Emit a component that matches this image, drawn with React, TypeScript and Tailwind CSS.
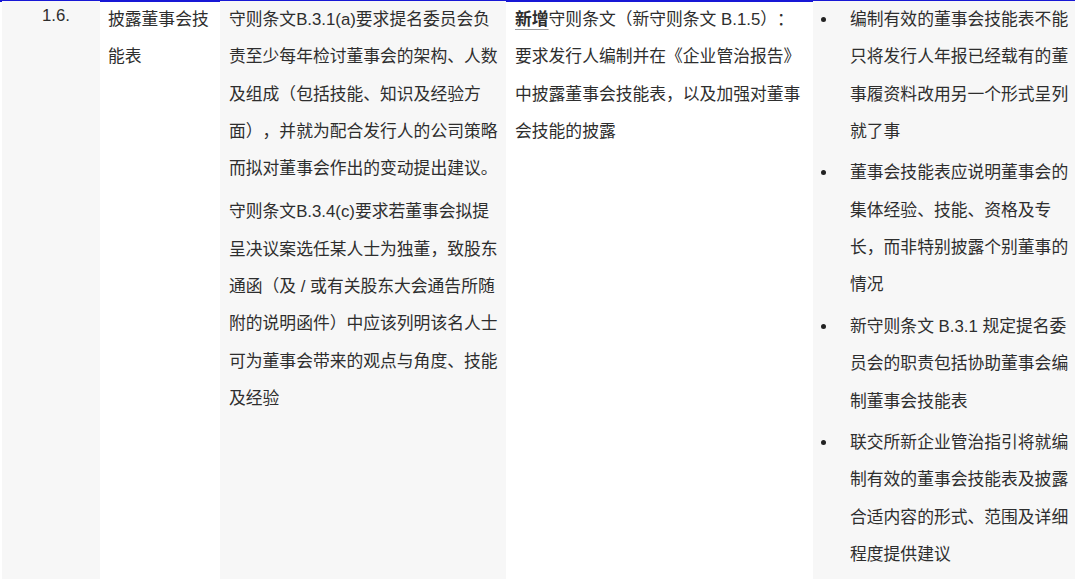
import React from "react";

const col3a = [
  "守则条文B.3.1(a)要求提名委员会负",
  "责至少每年检讨董事会的架构、人数",
  "及组成（包括技能、知识及经验方",
  "面），并就为配合发行人的公司策略",
  "而拟对董事会作出的变动提出建议。",
];

const col3b = [
  "守则条文B.3.4(c)要求若董事会拟提",
  "呈决议案选任某人士为独董，致股东",
  "通函（及 / 或有关股东大会通告所随",
  "附的说明函件）中应该列明该名人士",
  "可为董事会带来的观点与角度、技能",
  "及经验",
];

const col4 = [
  "要求发行人编制并在《企业管治报告》",
  "中披露董事会技能表，以及加强对董事",
  "会技能的披露",
];

const bullets = [
  ["编制有效的董事会技能表不能", "只将发行人年报已经载有的董", "事履资料改用另一个形式呈列", "就了事"],
  ["董事会技能表应说明董事会的", "集体经验、技能、资格及专", "长，而非特别披露个别董事的", "情况"],
  ["新守则条文 B.3.1 规定提名委", "员会的职责包括协助董事会编", "制董事会技能表"],
  ["联交所新企业管治指引将就编", "制有效的董事会技能表及披露", "合适内容的形式、范围及详细", "程度提供建议"],
];

const Lines = ({ lines }: { lines: string[] }) => (
  <>
    {lines.map((l, i) => (
      <div key={i} className="whitespace-nowrap">
        {l}
      </div>
    ))}
  </>
);

export default function App() {
  return (
    <div
      className="w-[1080px] h-[579px] bg-white overflow-hidden text-[#2e2e2e] text-[16.8px] leading-[37.3px] [text-spacing-trim:space-all]"
      style={{ fontFamily: '"Liberation Sans", "Noto Sans CJK SC", sans-serif' }}
    >
      <div className="h-[2px] w-[1075px] bg-[#1818d6]" />
      <div className="flex h-[577px] w-[1075px]">
        <div className="ml-[2px] w-[98px] bg-[#f7f7f7] pl-[40px] -mt-[1px]">
          <div className="leading-[30px]">1.6.</div>
        </div>

        <div className="w-[120px] pl-[8px] -mt-[1px]">
          <Lines lines={["披露董事会技", "能表"]} />
        </div>

        <div className="w-[286px] bg-[#f7f7f7] pl-[9px] -mt-[1px]">
          <Lines lines={col3a} />
          <div className="mt-[6px]">
            <Lines lines={col3b} />
          </div>
        </div>

        <div className="w-[307px] pl-[9px] -mt-[1px]">
          <div className="whitespace-nowrap">
            <span className="font-bold underline decoration-[#999] underline-offset-4">新增</span>
            守则条文（新守则条文 B.1.5）：
          </div>
          <Lines lines={col4} />
        </div>

        <div className="w-[262px] bg-[#f7f7f7] -mt-[1px] flex flex-col gap-[4.3px]">
          {bullets.map((b, i) => (
            <div key={i} className="flex">
              <div className="w-[37px] pl-[8px] pt-[16px]">
                <div className="w-[5px] h-[5px] rounded-full bg-[#222]" />
              </div>
              <div>
                <Lines lines={b} />
              </div>
            </div>
          ))}
        </div>
      </div>
    </div>
  );
}
